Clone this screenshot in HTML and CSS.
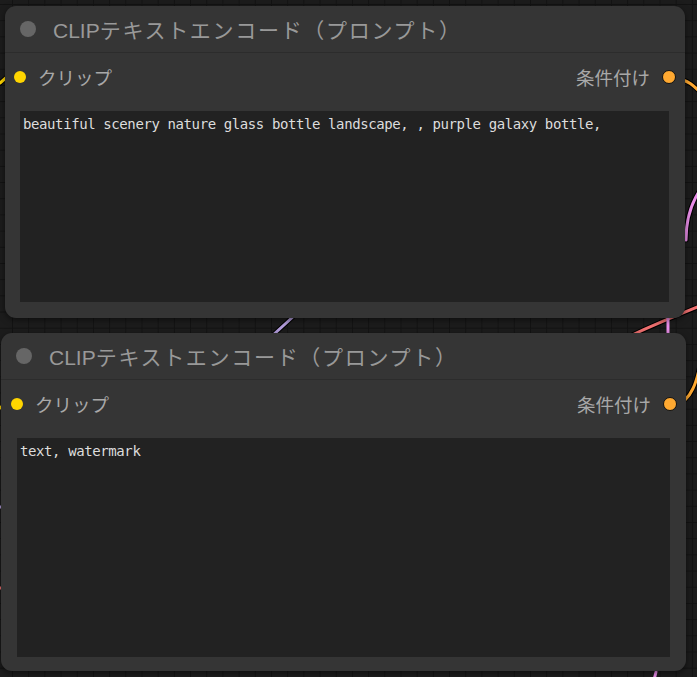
FILE: index.html
```html
<!DOCTYPE html>
<html lang="ja">
<head>
  <meta charset="UTF-8" />
  <meta name="viewport" content="width=device-width, initial-scale=1.0"/>
  <title>CLIPテキストエンコード</title>
  <link rel="stylesheet" href="styles.css">
</head>
<body>

<div class="canvas">
  <!-- cables behind the nodes -->
  <svg class="wires" width="697" height="677" viewBox="0 0 697 677">
    <g fill="none" stroke-linecap="round">
      <path d="M0 83 L8 76" stroke="#000" stroke-width="5"/>
      <path d="M0 83 L8 76" stroke="#ffd500" stroke-width="3"/>
      <path d="M676 78 C688 80 694 86 700 92" stroke="#000" stroke-width="5"/>
      <path d="M676 78 C688 80 694 86 700 92" stroke="#ffa931" stroke-width="3"/>
      <path d="M700 190 C690 205 686 220 686 240" stroke="#000" stroke-width="5"/>
      <path d="M700 190 C690 205 686 220 686 240" stroke="#e98ee8" stroke-width="3"/>
      <path d="M272 336 L296 314" stroke="#000" stroke-width="5"/>
      <path d="M272 336 L296 314" stroke="#b39ddb" stroke-width="3"/>
      <path d="M630 336 C660 322 680 314 700 306" stroke="#000" stroke-width="5"/>
      <path d="M630 336 C660 322 680 314 700 306" stroke="#f07070" stroke-width="3"/>
      <path d="M668 318 L668 336" stroke="#e98ee8" stroke-width="3"/>
      <path d="M676 405 C692 400 697 380 700 365" stroke="#000" stroke-width="5"/>
      <path d="M676 405 C692 400 697 380 700 365" stroke="#ffa931" stroke-width="3"/>
      <path d="M656 672 L654 680" stroke="#e98ee8" stroke-width="3"/>
      <path d="M0 408 L4 405" stroke="#ffd500" stroke-width="3"/>
      <path d="M0 507 L3 507" stroke="#b39ddb" stroke-width="3"/>
      <path d="M0 588 L3 588" stroke="#f07070" stroke-width="3"/>
    </g>
  </svg>

  <div class="node node-top">
    <div class="node-title">
      <span class="title-dot"></span>
      <span class="title-text">CLIP<span class="jp">テキストエンコード（プロンプト）</span></span>
    </div>
    <div class="slots">
      <div class="slot"><span class="dot dot-clip"></span>クリップ</div>
      <div class="slot">条件付け<span class="dot dot-cond"></span></div>
    </div>
    <textarea class="prompt" spellcheck="false">beautiful scenery nature glass bottle landscape, , purple galaxy bottle,</textarea>
  </div>

  <div class="node node-bottom">
    <div class="node-title">
      <span class="title-dot"></span>
      <span class="title-text">CLIP<span class="jp">テキストエンコード（プロンプト）</span></span>
    </div>
    <div class="slots">
      <div class="slot"><span class="dot dot-clip"></span>クリップ</div>
      <div class="slot">条件付け<span class="dot dot-cond"></span></div>
    </div>
    <textarea class="prompt" spellcheck="false">text, watermark</textarea>
  </div>
</div>

</body>
</html>
```

FILE: styles.css
```css
/* Lienzo de nodos */
body {
  margin: 0;
  overflow: hidden;
  background: #1b1b1b;
  font-family: "Liberation Sans", "Noto Sans CJK JP", sans-serif;
}

.canvas {
  position: relative;
  width: 697px;
  height: 677px;
  background-color: #1c1c1c;
  background-image:
    linear-gradient(to right, #131313 1px, transparent 1px),
    linear-gradient(to bottom, #131313 1px, transparent 1px);
  background-size: 16.2px 16.2px;
  background-position: 12px 4px;
}

.wires {
  position: absolute;
  left: 0;
  top: 0;
}

.node {
  position: absolute;
  display: flex;
  flex-direction: column;
  background: #353535;
  border-radius: 11px;
  box-shadow: 0 2px 6px rgba(0,0,0,0.5);
}

.node-top {
  left: 5px;
  top: 6px;
  width: 680px;
  height: 312px;
}

.node-bottom {
  left: 1px;
  top: 333px;
  width: 685px;
  height: 338px;
}

.node-title {
  height: 47px;
  display: flex;
  align-items: center;
  gap: 17px;
  padding-left: 15px;
  border-bottom: 1px solid #2c2c2c;
  box-sizing: border-box;
}

.title-dot {
  width: 16px;
  height: 16px;
  border-radius: 50%;
  background: #666;
}

.title-text {
  color: #999;
  font-size: 21px;
  text-spacing-trim: space-all;
}

.jp {
  letter-spacing: 1.7px;
}

.slots {
  display: flex;
  justify-content: space-between;
  align-items: center;
  height: 47px;
  padding: 0 9px;
  color: #a8a8a8;
  font-size: 18.5px;
}

.node-bottom .slots {
  padding-left: 10px;
}

.slot {
  display: flex;
  align-items: center;
  gap: 12px;
}

.dot {
  width: 12px;
  height: 12px;
  border-radius: 50%;
  box-sizing: border-box;
}

.dot-clip {
  background: #ffd500;
}

.dot-cond {
  background: #ffa931;
  border: 1.5px solid #111;
  width: 14px;
  height: 14px;
}

.prompt {
  margin: 11px 16px 0 15px;
  height: 191px;
  resize: none;
  border: none;
  outline: none;
  background: #222;
  color: #ddd;
  padding: 4px 3px;
  font-family: "DejaVu Sans Mono", "Liberation Mono", monospace;
  font-size: 14px;
  letter-spacing: -0.4px;
  line-height: 1.3;
  box-sizing: border-box;
}

.node-bottom .prompt {
  margin-left: 16px;
  height: 219px;
}
```
